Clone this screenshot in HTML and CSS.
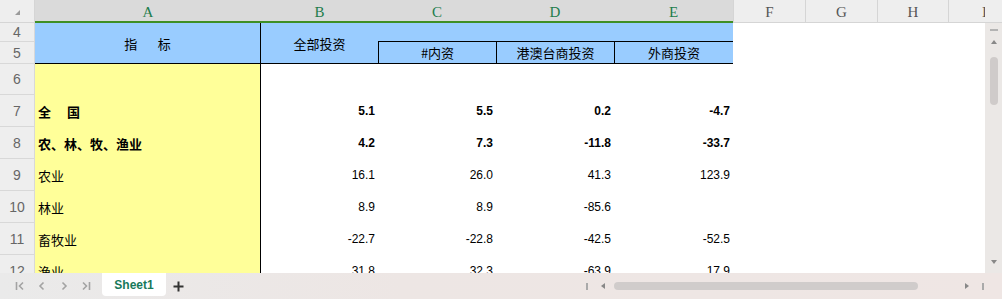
FILE: index.html
```html
<!DOCTYPE html>
<html lang="zh-CN">
<head>
    <meta charset="UTF-8">
    <title>Sheet1</title>
    <link rel="stylesheet" href="styles.css">
</head>
<body>
<div id="app">
    <div id="main">
        <div id="sheet_wrap">
            <div id="sheet">
                <!-- 列标 -->
                <div class="corner"><span class="tri"></span></div>
                <div class="colhd sel">A</div>
                <div class="colhd sel">B</div>
                <div class="colhd sel">C</div>
                <div class="colhd sel">D</div>
                <div class="colhd sel">E</div>
                <div class="colhd">F</div>
                <div class="colhd">G</div>
                <div class="colhd">H</div>
                <div class="colhd">I</div>

                <!-- 表头 第4行 -->
                <div class="rowhd">4</div>
                <div class="th th_a">指&nbsp;&nbsp;&nbsp;&nbsp;&nbsp;&nbsp;&nbsp;标</div>
                <div class="th th_b">全部投资</div>
                <div class="th th_top"></div>
                <div class="cell"></div><div class="cell"></div><div class="cell"></div><div class="cell"></div>

                <!-- 表头 第5行 -->
                <div class="rowhd">5</div>
                <div class="th th_sub">#内资</div>
                <div class="th th_sub">港澳台商投资</div>
                <div class="th th_sub">外商投资</div>
                <div class="cell"></div><div class="cell"></div><div class="cell"></div><div class="cell"></div>

                <!-- 数据 -->
                <div class="rowhd">6</div>
                <div class="cell name"></div>
                <div class="cell"></div><div class="cell"></div><div class="cell"></div><div class="cell"></div>
                <div class="cell"></div><div class="cell"></div><div class="cell"></div><div class="cell"></div>

                <div class="rowhd">7</div>
                <div class="cell name b">全　 国</div>
                <div class="cell num b">5.1</div><div class="cell num b">5.5</div><div class="cell num b">0.2</div><div class="cell num b">-4.7</div>
                <div class="cell"></div><div class="cell"></div><div class="cell"></div><div class="cell"></div>

                <div class="rowhd">8</div>
                <div class="cell name b">农、林、牧、渔业</div>
                <div class="cell num b">4.2</div><div class="cell num b">7.3</div><div class="cell num b">-11.8</div><div class="cell num b">-33.7</div>
                <div class="cell"></div><div class="cell"></div><div class="cell"></div><div class="cell"></div>

                <div class="rowhd">9</div>
                <div class="cell name">农业</div>
                <div class="cell num">16.1</div><div class="cell num">26.0</div><div class="cell num">41.3</div><div class="cell num">123.9</div>
                <div class="cell"></div><div class="cell"></div><div class="cell"></div><div class="cell"></div>

                <div class="rowhd">10</div>
                <div class="cell name">林业</div>
                <div class="cell num">8.9</div><div class="cell num">8.9</div><div class="cell num">-85.6</div><div class="cell num"></div>
                <div class="cell"></div><div class="cell"></div><div class="cell"></div><div class="cell"></div>

                <div class="rowhd">11</div>
                <div class="cell name">畜牧业</div>
                <div class="cell num">-22.7</div><div class="cell num">-22.8</div><div class="cell num">-42.5</div><div class="cell num">-52.5</div>
                <div class="cell"></div><div class="cell"></div><div class="cell"></div><div class="cell"></div>

                <div class="rowhd">12</div>
                <div class="cell name">渔业</div>
                <div class="cell num">31.8</div><div class="cell num">32.3</div><div class="cell num">-63.9</div><div class="cell num">17.9</div>
                <div class="cell"></div><div class="cell"></div><div class="cell"></div><div class="cell"></div>
            </div>
        </div>
        <div id="vscroll">
            <div class="vcorner"></div>
            <div class="vtrack">
                <span class="vdash"></span>
                <span class="arr_up"></span>
                <span class="vthumb"></span>
                <span class="arr_down"></span>
            </div>
        </div>
    </div>
    <div id="tabbar">
        <div class="nav">
            <span class="navbtn"><svg width="10" height="10" viewBox="0 0 10 10"><path d="M1.5 1v8M8 1.5L4.5 5 8 8.5" fill="none" stroke="#a3a3a3" stroke-width="1.6"/></svg></span>
            <span class="navbtn"><svg width="10" height="10" viewBox="0 0 10 10"><path d="M6.5 1.5L3 5l3.5 3.5" fill="none" stroke="#a3a3a3" stroke-width="1.6"/></svg></span>
            <span class="navbtn"><svg width="10" height="10" viewBox="0 0 10 10"><path d="M3.5 1.5L7 5 3.5 8.5" fill="none" stroke="#a3a3a3" stroke-width="1.6"/></svg></span>
            <span class="navbtn"><svg width="10" height="10" viewBox="0 0 10 10"><path d="M2 1.5L5.5 5 2 8.5M8.5 1v8" fill="none" stroke="#a3a3a3" stroke-width="1.6"/></svg></span>
        </div>
        <div class="tab">Sheet1</div>
        <span class="add"><svg width="11" height="11" viewBox="0 0 11 11"><path d="M5.5 0.5v10M0.5 5.5h10" fill="none" stroke="#333" stroke-width="2"/></svg></span>
        <div id="hscroll">
            <span class="hbar"></span>
            <span class="arr_left"></span>
            <span class="hthumb"></span>
            <span class="arr_right"></span>
            <span class="hbar last"></span>
        </div>
    </div>
</div>
</body>
</html>
```

FILE: styles.css
```css
*{
    margin: 0;
    padding: 0;
    box-sizing: border-box;
}
body{
    width: 1002px;
    height: 299px;
    overflow: hidden;
    background-color: #fff;
    font-family: "Liberation Sans", "Noto Sans CJK SC", sans-serif;
}
#app{
    display: flex;
    flex-direction: column;
    height: 299px;
}
#main{
    display: flex;
    height: 273px;
}
#sheet_wrap{
    width: 985px;
    height: 273px;
    overflow: hidden;
}
#sheet{
    display: grid;
    grid-template-columns: 35px 226px 117px 118px 118px 119px 72px 72px 71px 72px;
    grid-template-rows: 23px 19px 22px 31px repeat(6, 32px);
    width: 1020px;
}

/* 列标 行号 */
.corner{
    background-color: #eeeeee;
    border-bottom: 1px solid #d5d5d5;
    border-right: 1px solid #d5d5d5;
    position: relative;
}
.corner .tri{
    position: absolute;
    left: 15px;
    top: 10px;
    width: 0;
    height: 0;
    border-left: 5px solid transparent;
    border-bottom: 5px solid #9a9a9a;
}
.colhd{
    display: flex;
    align-items: center;
    justify-content: center;
    padding-top: 3px;
    background-color: #eeeeee;
    border-bottom: 1px solid #d5d5d5;
    border-left: 1px solid #d5d5d5;
    font-family: "Liberation Serif", serif;
    font-size: 15px;
    color: #555;
}
.colhd.sel{
    background-color: #dadada;
    border-left: none;
    border-bottom: 2px solid #3f8f25;
    color: #1d7d4c;
}
.rowhd{
    display: flex;
    align-items: center;
    justify-content: center;
    background-color: #eeeeee;
    border-bottom: 1px solid #d8d8d8;
    border-right: 1px solid #d8d8d8;
    font-family: "Liberation Sans", sans-serif;
    font-size: 14px;
    color: #666;
}

/* 表头 */
.th{
    display: flex;
    align-items: center;
    justify-content: center;
    background-color: #99ccff;
    font-family: "Noto Sans CJK SC", sans-serif;
    font-size: 13px;
    color: #000;
}
.th_a{
    grid-row: span 2;
    border-right: 1px solid #000;
    border-bottom: 1px solid #000;
}
.th_b{
    grid-row: span 2;
    border-bottom: 1px solid #000;
}
.th_top{
    grid-column: span 3;
    border-bottom: 1px solid #000;
}
.th_sub{
    border-left: 1px solid #000;
    border-bottom: 1px solid #000;
}

/* 单元格 */
.cell{
    display: flex;
    align-items: center;
    background-color: #fff;
    font-size: 12px;
    color: #000;
}
.cell.name{
    background-color: #ffff99;
    border-right: 1px solid #000;
    padding-left: 3px;
    font-family: "Noto Sans CJK SC", sans-serif;
    font-size: 13px;
}
.cell.num{
    justify-content: flex-end;
    padding-right: 3px;
}
.cell.b{
    font-weight: bold;
}

/* 竖滚动条 */
#vscroll{
    width: 17px;
    display: flex;
    flex-direction: column;
}
.vcorner{
    height: 23px;
    background-color: #eeeeee;
    border-bottom: 1px solid #d5d5d5;
}
.vtrack{
    flex: 1;
    display: flex;
    flex-direction: column;
    align-items: center;
    background-color: #ebe8e6;
    padding-left: 1px;
}
.vdash{
    width: 8px;
    height: 2px;
    margin-top: 6px;
    background-color: #b3b3b3;
}
.arr_up{
    margin-top: 9px;
    border-left: 3px solid transparent;
    border-right: 3px solid transparent;
    border-bottom: 4px solid #888;
}
.vthumb{
    width: 8px;
    height: 48px;
    margin-top: 13px;
    border-radius: 4px;
    background-color: #cfcbca;
}
.arr_down{
    margin-top: auto;
    margin-bottom: 9px;
    border-left: 3px solid transparent;
    border-right: 3px solid transparent;
    border-top: 4px solid #888;
}

/* 底部标签栏 */
#tabbar{
    height: 26px;
    display: flex;
    align-items: center;
    background: linear-gradient(to right, #eaeaea, #ede6e4 40%, #efe6e4);
}
.nav{
    display: flex;
    padding-left: 9px;
}
.navbtn{
    width: 22px;
    height: 10px;
    display: flex;
    justify-content: center;
}
.navbtn svg{
    display: block;
}
.tab{
    align-self: flex-start;
    width: 64px;
    height: 23px;
    margin-left: 5px;
    background-color: #fff;
    border-radius: 0 0 4px 4px;
    display: flex;
    align-items: center;
    justify-content: center;
    font-size: 12px;
    font-weight: bold;
    color: #17795a;
}
.add{
    margin-left: 7px;
    display: flex;
}
#hscroll{
    margin-left: auto;
    padding-right: 18px;
    display: flex;
    align-items: center;
}
.hbar{
    width: 2px;
    height: 7px;
    background-color: #aaa;
}
.hbar.last{
    margin-left: 13px;
}
.arr_left{
    margin-left: 13px;
    border-top: 3px solid transparent;
    border-bottom: 3px solid transparent;
    border-right: 4px solid #888;
}
.hthumb{
    width: 304px;
    height: 8px;
    margin-left: 9px;
    border-radius: 4px;
    background-color: #d0cccb;
}
.arr_right{
    margin-left: 47px;
    border-top: 3px solid transparent;
    border-bottom: 3px solid transparent;
    border-left: 4px solid #888;
}
```
